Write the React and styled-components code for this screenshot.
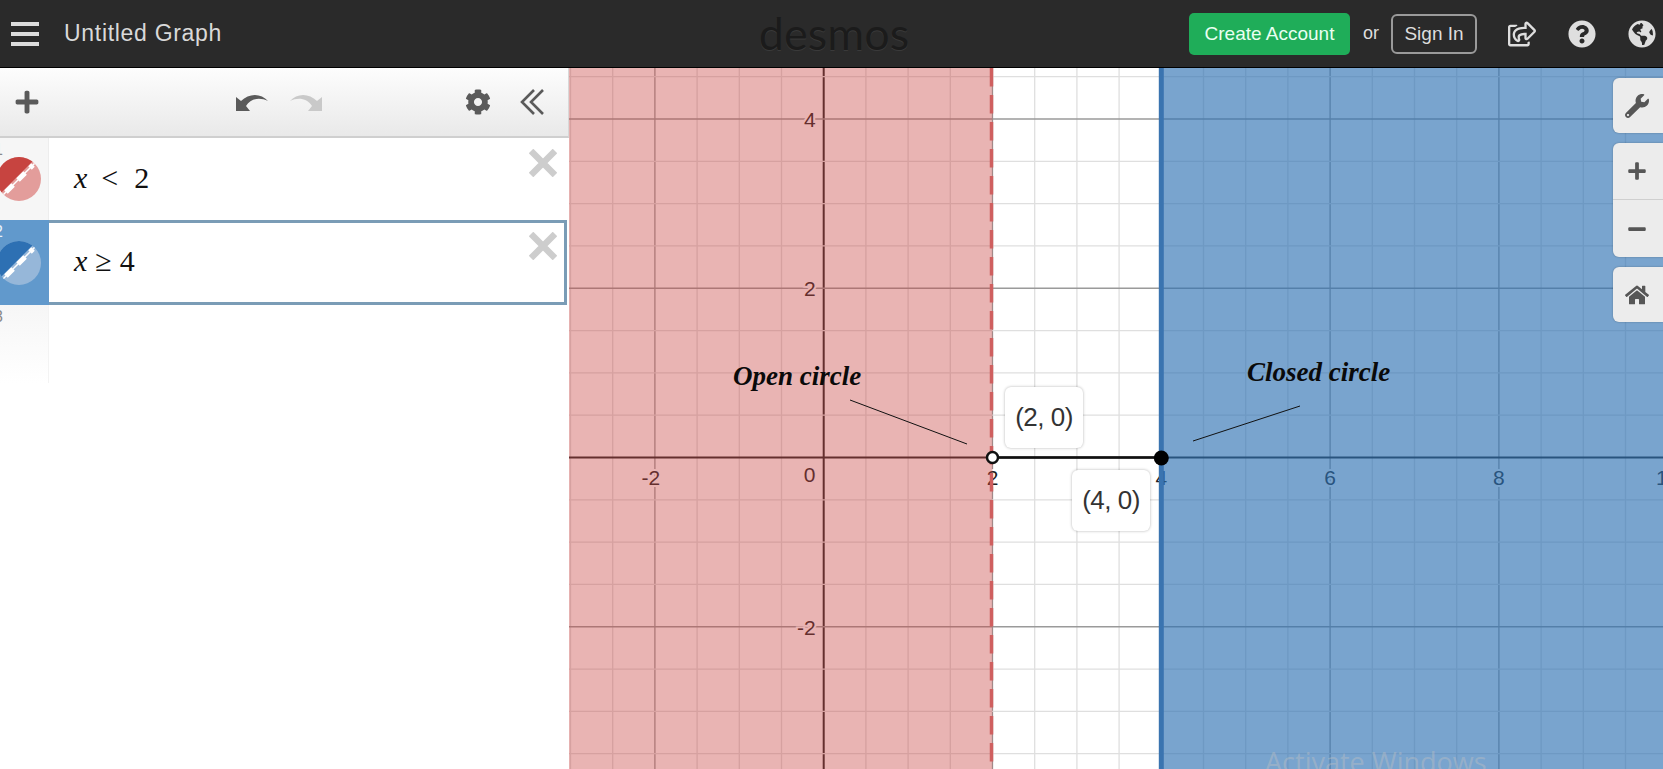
import React from "react";
import styled, { createGlobalStyle } from "styled-components";
import {
  FaCog,
  FaGlobeAmericas,
  FaHome,
  FaMinus,
  FaPlus,
  FaQuestionCircle,
  FaRegShareSquare,
  FaWrench,
} from "react-icons/fa";

const GlobalStyle = createGlobalStyle`
  html, body {
    margin: 0;
    height: 100%;
    overflow: hidden;
    background: #fff;
    font-family: "Liberation Sans", Arial, sans-serif;
  }
`;

const Page = styled.div`
  display: flex;
  flex-direction: column;
  height: 100vh;
  overflow: hidden;
`;

const Header = styled.header`
  box-sizing: border-box;
  flex: 0 0 68px;
  display: grid;
  grid-template-columns: 1fr auto 1fr;
  align-items: center;
  background: #2a2a2a;
  border-bottom: 1px solid #000;
  color: #e6e6e6;
`;

const HeaderLeft = styled.div`
  display: flex;
  align-items: center;
  gap: 25px;
  padding-left: 11px;
`;

const Burger = styled.div`
  display: flex;
  flex-direction: column;
  gap: 6px;
  width: 28px;

  span {
    height: 4px;
    background: #dcdcdc;
  }
`;

const GraphTitle = styled.div`
  font-size: 23px;
  letter-spacing: 0.7px;
  color: #d9d9d9;
`;

const Logo = styled.div`
  font-family: Lato, sans-serif;
  font-size: 45px;
  line-height: 1;
  color: #1b1b1b;
  margin-left: 5px;
  text-shadow: 0 1px 0 #3a3a3a;
`;

const HeaderRight = styled.div`
  display: flex;
  align-items: center;
  justify-content: flex-end;
  padding-right: 7px;
`;

const CreateButton = styled.div`
  width: 161px;
  height: 42px;
  display: flex;
  align-items: center;
  justify-content: center;
  background: #1fad59;
  border-radius: 5px;
  font-size: 19px;
  color: #e9fff1;
`;

const OrLabel = styled.span`
  font-size: 18px;
  margin: 0 12px 0 13px;
  color: #dedede;
`;

const SignInButton = styled.div`
  box-sizing: border-box;
  width: 86px;
  height: 40px;
  display: flex;
  align-items: center;
  justify-content: center;
  border: 2px solid #9a9a9a;
  border-radius: 6px;
  font-size: 19px;
  color: #dedede;
`;

const HeaderIcons = styled.div`
  display: flex;
  align-items: center;
  gap: 32px;
  margin-left: 31px;
  color: #dedede;
  font-size: 28px;

  svg {
    display: block;
  }
`;

const Main = styled.main`
  flex: 1;
  display: flex;
  min-height: 0;
`;

const Panel = styled.aside`
  flex: 0 0 569px;
  display: flex;
  flex-direction: column;
  background: #fff;
`;

const Toolbar = styled.div`
  box-sizing: border-box;
  height: 70px;
  display: grid;
  grid-template-columns: 1fr auto 1fr;
  align-items: center;
  padding: 0 24px 0 14px;
  background: linear-gradient(#fdfdfd, #e9e9e9);
  border-bottom: 2px solid #cfcfcf;
  border-right: 1px solid #d8d8d8;
  color: #5a5a5a;
`;

const ToolGroup = styled.div`
  display: flex;
  align-items: center;
  gap: ${(p) => p.$gap || 0}px;
  justify-content: ${(p) => p.$end ? "flex-end" : "flex-start"};
  font-size: 26px;

  svg {
    display: block;
  }
`;

const ExpressionRow = styled.div`
  box-sizing: border-box;
  display: flex;
  height: ${(p) => p.$height}px;
  width: 567px;
`;

const Gutter = styled.div`
  position: relative;
  flex: 0 0 49px;
  display: flex;
  align-items: center;
  overflow: hidden;
  background: ${(p) => p.$active ? "#6199cc" : "#f6f6f6"};
  border-right: 1px solid ${(p) => p.$active ? "#6199cc" : "#ededed"};
  box-sizing: border-box;

  svg {
    margin-left: -3px;
    flex: none;
  }
`;

const RowNumber = styled.span`
  position: absolute;
  left: -6px;
  top: 3px;
  font-size: 16px;
  color: ${(p) => p.$active ? "#e8f1fa" : "#8a8a8a"};
`;

const MathCell = styled.div`
  position: relative;
  flex: 1;
  display: flex;
  align-items: center;
  box-sizing: border-box;
  padding: 0 0 3px 25px;
  background: #fff;
  border: ${(p) => p.$active ? "3px solid #7a9cb6" : "0 solid transparent"};
  border-left: 0;
`;

const MathText = styled.div`
  font-family: "Liberation Serif", "Times New Roman", serif;
  font-size: 30px;
  color: #111;
  white-space: pre;

  i {
    margin-right: ${(p) => p.$tight ? 8 : 14}px;
  }

  b {
    font-weight: 400;
    margin-right: ${(p) => p.$tight ? 8 : 16}px;
  }
`;

const RemoveIcon = styled.svg`
  position: absolute;
  right: ${(p) => p.$active ? 7 : 10}px;
  top: ${(p) => p.$active ? 9 : 11}px;
  width: 28px;
  height: 28px;
`;

const FadingRow = styled.div`
  display: flex;
  height: 78px;
  width: 567px;
`;

const FadingGutter = styled.div`
  position: relative;
  flex: 0 0 49px;
  box-sizing: border-box;
  overflow: hidden;
  background: linear-gradient(#f6f6f6, #fff);
  border-right: 1px solid #f3f3f3;
`;

const GraphPaper = styled.section`
  position: relative;
  flex: 1;
  overflow: hidden;
  background: #fff;
`;

const Plot = styled.svg`
  display: block;
  width: 100%;
  height: 100%;
`;

const AxisLabel = styled.text`
  font-family: "Liberation Sans", Arial, sans-serif;
  font-size: 21px;
  fill: #222;
  stroke: #fff;
  stroke-width: 4px;
  paint-order: stroke;
  text-anchor: ${(p) => p.$anchor || "middle"};
`;

const Annotation = styled.text`
  font-family: "Liberation Serif", "Times New Roman", serif;
  font-weight: 700;
  font-style: italic;
  font-size: 27px;
  fill: #0a0a0a;
`;

const PointLabel = styled.div`
  position: absolute;
  left: ${(p) => p.$x}px;
  top: ${(p) => p.$y}px;
  box-sizing: border-box;
  width: 78px;
  height: 61px;
  display: flex;
  align-items: center;
  justify-content: center;
  background: #fff;
  border-radius: 6px;
  box-shadow: 0 0 3px rgba(0, 0, 0, 0.3);
  font-size: 26px;
  letter-spacing: -0.5px;
  color: #333;
`;

const ControlStack = styled.div`
  position: absolute;
  top: 10px;
  right: 0;
  display: flex;
  flex-direction: column;
  gap: 10px;
`;

const ControlGroup = styled.div`
  display: flex;
  flex-direction: column;
  width: 50px;
  background: #ececec;
  border-radius: 6px 0 0 6px;
  box-shadow: 0 0 2px rgba(0, 0, 0, 0.3);
  color: #565656;
`;

const ControlButton = styled.div`
  box-sizing: border-box;
  height: ${(p) => p.$height || 55}px;
  display: flex;
  align-items: center;
  justify-content: center;
  font-size: ${(p) => p.$size || 24}px;
  padding-right: 3px;
  border-top: ${(p) => p.$divided ? "1px solid #cfcfcf" : "0"};
`;

const Watermark = styled.div`
  position: absolute;
  left: 696px;
  top: 675px;
  font-family: "Open Sans", sans-serif;
  font-size: 27px;
  color: rgba(185, 190, 195, 0.45);
  pointer-events: none;
`;

// page coordinates of the plot, the graph panel starts at (569, 68)
const originX = 823.7 - 569;
const originY = 457.5 - 68;
const minorX = 42.2;
const minorY = 42.31;
const plotW = 1094;
const plotH = 701;

function gridSteps(origin, step, size) {
  const steps = [];
  for (let k = -Math.floor(origin / step); origin + k * step <= size; k++) {
    steps.push(k);
  }
  return steps;
}

function Swatch({ id, dark, light }) {
  return (
    <svg width="44" height="44" viewBox="0 0 44 44">
      <clipPath id={id}>
        <circle cx="22" cy="22" r="22" />
      </clipPath>
      <g clipPath={`url(#${id})`}>
        <rect width="44" height="44" fill={light} />
        <path d="M-4 44 L44 -4 L-4 -4 Z" fill={dark} />
        <line x1="0" y1="44" x2="44" y2="0" stroke="#fff" strokeWidth="1.5" />
        <line x1="9" y1="35" x2="36" y2="8" stroke="#fff" strokeWidth="5" strokeDasharray="10 7" />
      </g>
    </svg>
  );
}

function Remove({ active }) {
  return (
    <RemoveIcon $active={active} viewBox="0 0 28 28">
      <path d="M2 2 L26 26 M26 2 L2 26" stroke="#cdcdcd" strokeWidth="6.5" fill="none" />
    </RemoveIcon>
  );
}

function Graph() {
  const vertical = gridSteps(originX, minorX, plotW);
  const horizontal = gridSteps(originY, minorY, plotH);
  const boundRed = originX + 4 * minorX;
  const boundBlue = originX + 8 * minorX;
  const xLabels = [-2, 2, 4, 6, 8, 10];

  return (
    <Plot viewBox={`0 0 ${plotW} ${plotH}`}>
      {vertical.map((k) => (
        <line
          key={k}
          x1={originX + k * minorX}
          x2={originX + k * minorX}
          y1="0"
          y2={plotH}
          stroke={k === 0 ? "#222" : k % 4 === 0 ? "#9a9a9a" : "#dfdfdf"}
          strokeWidth={k === 0 ? 2 : 1.3}
        />
      ))}
      {horizontal.map((k) => (
        <line
          key={k}
          x1="0"
          x2={plotW}
          y1={originY + k * minorY}
          y2={originY + k * minorY}
          stroke={k === 0 ? "#222" : k % 4 === 0 ? "#9a9a9a" : "#dfdfdf"}
          strokeWidth={k === 0 ? 2 : 1.3}
        />
      ))}
      {xLabels.map((n) => (
        <AxisLabel key={n} x={originX + n * 2 * minorX - (n < 0 ? 4 : 0)} y={originY + 27}>
          {n < 0 ? `-${-n}` : n}
        </AxisLabel>
      ))}
      <AxisLabel x={originX - 14} y={originY + 24} $anchor="middle">0</AxisLabel>
      <AxisLabel x={originX - 8} y={originY - 8 * minorY + 8} $anchor="end">4</AxisLabel>
      <AxisLabel x={originX - 8} y={originY - 4 * minorY + 8} $anchor="end">2</AxisLabel>
      <AxisLabel x={originX - 8} y={originY + 4 * minorY + 8} $anchor="end">-2</AxisLabel>

      <rect x="0" y="0" width={boundRed} height={plotH} fill="#c74440" fillOpacity="0.4" />
      <rect x={boundBlue} y="0" width={plotW - boundBlue} height={plotH} fill="#2d70b3" fillOpacity="0.64" />
      <line
        x1={boundRed - 1}
        x2={boundRed - 1}
        y1="0"
        y2={plotH}
        stroke="#cf5f5f"
        strokeWidth="3.5"
        strokeDasharray="18.5 8.5"
      />
      <line x1={boundBlue} x2={boundBlue} y1="0" y2={plotH} stroke="#3a74b0" strokeWidth="5" />

      <line x1={boundRed} x2={boundBlue} y1={originY} y2={originY} stroke="#111" strokeWidth="2.5" />
      <circle cx={boundRed} cy={originY} r="5.5" fill="#fff" stroke="#111" strokeWidth="2.5" />
      <circle cx={boundBlue} cy={originY + 0.5} r="7.5" fill="#000" />

      <line x1="281" y1="332" x2="398" y2="376" stroke="#111" strokeWidth="1" />
      <line x1="731" y1="338" x2="624" y2="373" stroke="#111" strokeWidth="1" />
      <Annotation x="164" y="317">Open circle</Annotation>
      <Annotation x="678" y="313">Closed circle</Annotation>
    </Plot>
  );
}

export default function App() {
  return (
    <Page>
      <GlobalStyle />
      <Header>
        <HeaderLeft>
          <Burger>
            <span />
            <span />
            <span />
          </Burger>
          <GraphTitle>Untitled Graph</GraphTitle>
        </HeaderLeft>
        <Logo>desmos</Logo>
        <HeaderRight>
          <CreateButton>Create Account</CreateButton>
          <OrLabel>or</OrLabel>
          <SignInButton>Sign In</SignInButton>
          <HeaderIcons>
            <FaRegShareSquare />
            <FaQuestionCircle />
            <FaGlobeAmericas />
          </HeaderIcons>
        </HeaderRight>
      </Header>
      <Main>
        <Panel>
          <Toolbar>
            <ToolGroup>
              <FaPlus />
            </ToolGroup>
            <ToolGroup $gap={22}>
              <svg width="32" height="20" viewBox="0 0 32 20" fill="#5a5a5a">
                <path d="M0 19 V5 L5 9 C13 1 25 1 32 9 C24 5 15 6 10 14 L14 19 Z" />
              </svg>
              <svg width="32" height="20" viewBox="0 0 32 20" fill="#c9c9c9">
                <path d="M32 19 V5 L27 9 C19 1 7 1 0 9 C8 5 17 6 22 14 L18 19 Z" />
              </svg>
            </ToolGroup>
            <ToolGroup $end $gap={29}>
              <FaCog />
              <svg width="24" height="26" viewBox="0 0 24 26" fill="none" stroke="#5a5a5a" strokeWidth="2.6">
                <path d="M14 1 L2 13 L14 25 M23 1 L11 13 L23 25" />
              </svg>
            </ToolGroup>
          </Toolbar>
          <ExpressionRow $height={82}>
            <Gutter>
              <RowNumber>1</RowNumber>
              <Swatch id="red-swatch" dark="#c74440" light="#e39d9b" />
            </Gutter>
            <MathCell>
              <MathText>
                <i>x</i>
                <b>&lt;</b>2
              </MathText>
              <Remove />
            </MathCell>
          </ExpressionRow>
          <ExpressionRow $height={85}>
            <Gutter $active>
              <RowNumber $active>2</RowNumber>
              <Swatch id="blue-swatch" dark="#2d70b3" light="#96b7d9" />
            </Gutter>
            <MathCell $active>
              <MathText $tight>
                <i>x</i>
                <b>≥</b>4
              </MathText>
              <Remove active />
            </MathCell>
          </ExpressionRow>
          <FadingRow>
            <FadingGutter>
              <RowNumber>3</RowNumber>
            </FadingGutter>
          </FadingRow>
        </Panel>
        <GraphPaper>
          <Graph />
          <PointLabel $x={436} $y={319}>(2, 0)</PointLabel>
          <PointLabel $x={503} $y={402}>(4, 0)</PointLabel>
          <ControlStack>
            <ControlGroup>
              <ControlButton>
                <FaWrench />
              </ControlButton>
            </ControlGroup>
            <ControlGroup>
              <ControlButton $height={56} $size={20}>
                <FaPlus />
              </ControlButton>
              <ControlButton $height={58} $size={20} $divided>
                <FaMinus />
              </ControlButton>
            </ControlGroup>
            <ControlGroup>
              <ControlButton>
                <FaHome />
              </ControlButton>
            </ControlGroup>
          </ControlStack>
          <Watermark>Activate Windows</Watermark>
        </GraphPaper>
      </Main>
    </Page>
  );
}
